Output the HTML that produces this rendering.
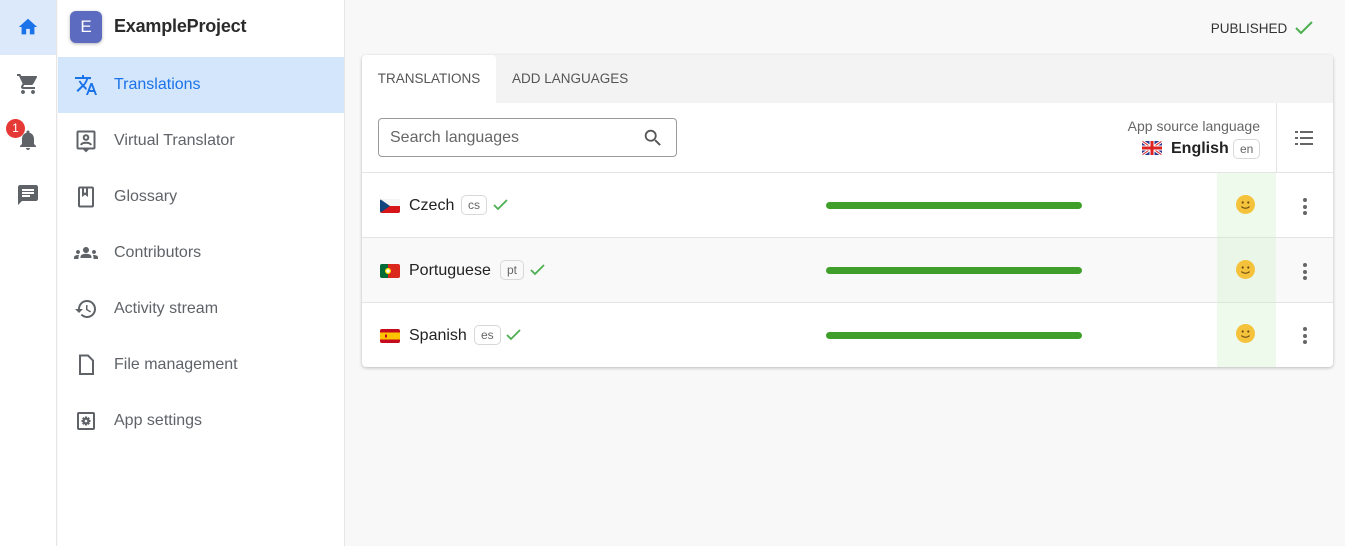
<!DOCTYPE html>
<html><head><meta charset="utf-8"><style>
*{box-sizing:border-box;margin:0;padding:0}
body{width:1345px;height:546px;overflow:hidden;background:#f8f8f8;font-family:"Liberation Sans",Arial,sans-serif;position:relative;color:#333}
.rail{position:absolute;left:0;top:0;width:57px;height:546px;background:#fff;border-right:1px solid #e6e6e6}
.rail .home{position:absolute;left:0;top:0;width:56px;height:55px;background:#dbe9fb}
.ic{position:absolute}
.side{position:absolute;left:58px;top:0;width:287px;height:546px;background:#fff;border-right:1px solid #e6e6e6}
.proj{position:absolute;left:12px;top:11px;width:32px;height:32px;border-radius:6px;background:#5c6bc0;color:#fff;font-size:17px;text-align:center;line-height:32px;box-shadow:0 1px 3px rgba(0,0,0,.3)}
.ptitle{position:absolute;left:56px;top:16px;font-size:18px;font-weight:bold;color:#2b2b2b;letter-spacing:-.2px}
.item{position:absolute;left:0;width:286px;height:56px;font-size:16px;color:#5f6368}
.item span{position:absolute;left:56px;top:19px}
.item svg{position:absolute;left:16px;top:16px}
.item.sel{background:#d4e6fc;color:#1a73e8}
.pub{position:absolute;right:31px;top:19px;font-size:13.5px;color:#333}
.card{position:absolute;left:362px;top:55px;width:971px;height:312px;background:#fff;border-radius:4px;box-shadow:0 1px 3px rgba(0,0,0,.25);overflow:hidden}
.tabs{height:48px;background:#f3f3f3;position:relative}
.tab{position:absolute;top:0;height:48px;line-height:48px;font-size:13.5px;color:#555}
.tab.act{background:#fff;left:0;width:134px;border-radius:4px 4px 0 0;text-align:center}
.hdr{position:absolute;top:48px;left:0;width:971px;height:70px;border-bottom:1px solid #e4e4e4}
.search{position:absolute;left:16px;top:15px;width:299px;height:39px;border:1px solid #9a9a9a;border-radius:4px;font-size:16px;color:#666;padding:10px 11px}
.row{position:absolute;left:0;width:971px;height:65px;border-bottom:1px solid #e4e4e4}
.row.alt{background:#f9f9f9}
.flag{position:absolute;left:18px;top:26px;width:20px;height:14px;border-radius:2px;overflow:hidden}
.lname{position:absolute;left:47px;top:24px;font-size:16px;color:#222}
.code{position:absolute;top:22px;height:20px;border:1px solid #d8d8d8;border-radius:5px;font-size:12px;color:#666;padding:2px 6px}
.bar{position:absolute;left:464px;top:29px;width:256px;height:7px;border-radius:4px;background:#3f9f2a}
.green{position:absolute;left:855px;top:118px;width:59px;height:194px;background:rgba(200,240,190,.3)}
.smile{position:absolute;left:874px;width:19px;height:19px;border-radius:50%;background:#f5c33b}
.dots{position:absolute;left:941px;width:4px}
.dots i{display:block;width:4px;height:4px;border-radius:50%;background:#666;margin-bottom:2.5px}
</style></head><body>
<div class="rail">
 <div class="home"></div>
 <svg class="ic" style="left:17px;top:16px" width="22" height="22" viewBox="0 0 24 24"><path fill="#1a73e8" d="M10 20v-6h4v6h5v-8h3L12 3 2 12h3v8z"/></svg>
 <svg class="ic" style="left:16px;top:72px" width="24" height="24" viewBox="0 0 24 24"><path fill="#5f6368" d="M7 18c-1.1 0-2 .9-2 2s.9 2 2 2 2-.9 2-2-.9-2-2-2zM1 2v2h2l3.6 7.6-1.4 2.4c-.1.3-.2.6-.2 1 0 1.1.9 2 2 2h12v-2H7.4c-.1 0-.2-.1-.2-.2v-.1l.9-1.7h7.4c.8 0 1.4-.4 1.7-1l3.6-6.5L21 4H5.2l-.9-2H1zm16 16c-1.1 0-2 .9-2 2s.9 2 2 2 2-.9 2-2-.9-2-2-2z"/></svg>
 <svg class="ic" style="left:16px;top:128px" width="24" height="24" viewBox="0 0 24 24"><path fill="#5f6368" d="M12 22c1.1 0 2-.9 2-2h-4c0 1.1.9 2 2 2zm6-6v-5c0-3.1-1.6-5.6-4.5-6.3V4c0-.8-.7-1.5-1.5-1.5s-1.5.7-1.5 1.5v.7C7.6 5.4 6 7.9 6 11v5l-2 2v1h16v-1l-2-2z"/></svg>
 <div style="position:absolute;left:6px;top:119px;width:19px;height:19px;border-radius:50%;background:#e53935;color:#fff;font-size:12px;text-align:center;line-height:19px">1</div>
 <svg class="ic" style="left:16px;top:183px" width="24" height="24" viewBox="0 0 24 24"><path fill="#5f6368" d="M20 2H4c-1.1 0-2 .9-2 2v18l4-4h14c1.1 0 2-.9 2-2V4c0-1.1-.9-2-2-2zM6 9h12v2H6V9zm8 5H6v-2h8v2zm4-6H6V6h12v2z"/></svg>
</div>
<div class="side">
 <div class="proj">E</div><div class="ptitle">ExampleProject</div>
 <div class="item sel" style="top:57px"><svg width="24" height="24" viewBox="0 0 24 24"><path fill="#1a73e8" d="M12.9 15.1l-2.5-2.5v0c1.7-1.9 3-4.1 3.7-6.5H17V4h-7V2H8v2H1v2h11.2c-.7 1.9-1.7 3.8-3.2 5.4-1-1.1-1.8-2.3-2.4-3.5h-2c.7 1.600 1.7 3.2 3 4.6l-5.1 5L4 19l5-5 3.1 3.1.8-2zM18.5 10h-2L12 22h2l1.1-3h4.8l1.1 3h2l-4.5-12zm-2.6 7l1.6-4.3 1.6 4.3h-3.2z"/></svg><span>Translations</span></div>
 <div class="item" style="top:113px"><svg width="24" height="24" viewBox="0 0 24 24" fill="none" stroke="#5f6368" stroke-width="2"><rect x="3.5" y="2.5" width="17" height="17" rx="1"/><circle cx="12" cy="8.5" r="2.3"/><path d="M7 16c1-3 9-3 10 0M9.5 19.5l2.5 2.5 2.5-2.5"/></svg><span>Virtual Translator</span></div>
 <div class="item" style="top:169px"><svg width="24" height="24" viewBox="0 0 24 24" fill="none" stroke="#5f6368" stroke-width="2"><rect x="5" y="2.5" width="14" height="19" rx="1"/><path d="M9 3v7l2-1.5L13 10V3"/></svg><span>Glossary</span></div>
 <div class="item" style="top:225px"><svg width="24" height="24" viewBox="0 0 24 24"><path fill="#5f6368" d="M12 12.8c1.6 0 3.1.4 4 .8.9.4 1.5 1.3 1.5 2.3V17h-11v-1.1c0-1 .6-1.9 1.5-2.3 1-.4 2.4-.8 4-.8zM4 13c1.1 0 2-.9 2-2s-.9-2-2-2-2 .9-2 2 .9 2 2 2zm1.1 1.1C4.8 14 4.4 14 4 14c-1 0-1.9.2-2.8.6C.5 14.9 0 15.6 0 16.4V18h4.5v-1.6c0-.8.2-1.6.6-2.3zM20 13c1.1 0 2-.9 2-2s-.9-2-2-2-2 .9-2 2 .9 2 2 2zm4 3.4c0-.8-.5-1.5-1.2-1.8-.9-.4-1.8-.6-2.8-.6-.4 0-.8 0-1.1.1.4.7.6 1.5.6 2.3V18H24v-1.6zM12 6c1.7 0 3 1.3 3 3s-1.3 3-3 3-3-1.3-3-3 1.3-3 3-3z"/></svg><span>Contributors</span></div>
 <div class="item" style="top:281px"><svg width="24" height="24" viewBox="0 0 24 24"><path fill="#5f6368" d="M13 3a9 9 0 0 0-9 9H1l3.9 3.9.1.1L9 12H6c0-3.9 3.1-7 7-7s7 3.1 7 7-3.1 7-7 7c-1.9 0-3.7-.8-4.9-2.1l-1.4 1.4C8.3 20 10.5 21 13 21a9 9 0 0 0 0-18zm-1 5v5l4.3 2.5.7-1.2-3.5-2.1V8H12z"/></svg><span>Activity stream</span></div>
 <div class="item" style="top:337px"><svg width="24" height="24" viewBox="0 0 24 24" fill="none" stroke="#5f6368" stroke-width="2"><path d="M6 2.5h8l5 5V21H6z"/></svg><span>File management</span></div>
 <div class="item" style="top:393px"><svg width="24" height="24" viewBox="0 0 24 24"><rect x="4" y="4" width="16" height="16" rx="1" fill="none" stroke="#5f6368" stroke-width="2"/><path stroke="#5f6368" stroke-width="2.2" d="M12 7.5v9M7.5 12h9M8.8 8.8l6.4 6.4M15.2 8.8l-6.4 6.4"/><circle cx="12" cy="12" r="3.3" fill="#5f6368"/><circle cx="12" cy="12" r="1.3" fill="#fff"/></svg><span>App settings</span></div>
</div>
<div class="pub">PUBLISHED <svg style="vertical-align:-4px;margin-left:3px" width="20" height="18" viewBox="0 0 20 18"><path d="M2 9l5 5L18 3" fill="none" stroke="#4caf50" stroke-width="2"/></svg></div>
<div class="card">
 <div class="tabs"><div class="tab act">TRANSLATIONS</div><div class="tab" style="left:150px">ADD LANGUAGES</div></div>
 <div class="hdr">
  <div class="search">Search languages<svg style="position:absolute;right:12px;top:8px" width="22" height="22" viewBox="0 0 24 24"><path fill="#555" d="M15.5 14h-.8l-.3-.3c1-1.1 1.6-2.6 1.6-4.2a6.5 6.5 0 1 0-6.5 6.5c1.6 0 3.1-.6 4.2-1.6l.3.3v.8l5 5 1.5-1.5-5-5zm-6 0C7 14 5 12 5 9.5S7 5 9.5 5 14 7 14 9.5 12 14 9.5 14z"/></svg></div>
  <div style="position:absolute;right:73px;top:15px;font-size:14px;color:#666">App source language</div>
  <div style="position:absolute;left:780px;top:38px;width:20px;height:14px;overflow:hidden;border-radius:2px"><svg width="20" height="14" viewBox="0 0 20 14"><rect width="20" height="14" fill="#2b3a8f"/><path d="M0 0L20 14M20 0L0 14" stroke="#fff" stroke-width="3"/><path d="M0 0L20 14M20 0L0 14" stroke="#d22" stroke-width="1"/><path d="M10 0v14M0 7h20" stroke="#fff" stroke-width="5"/><path d="M10 0v14M0 7h20" stroke="#d22" stroke-width="3"/></svg></div>
  <div style="position:absolute;left:809px;top:37px;font-size:16px;font-weight:bold;color:#222">English</div>
  <div class="code" style="left:871px;top:36px">en</div>
  <div style="position:absolute;left:914px;top:0;width:1px;height:70px;background:#e4e4e4"></div>
  <svg style="position:absolute;left:933px;top:26px" width="20" height="18" viewBox="0 0 20 18"><g fill="#666"><rect x="0" y="2" width="3" height="2"/><rect x="5" y="2" width="13" height="2"/><rect x="0" y="8" width="3" height="2"/><rect x="5" y="8" width="13" height="2"/><rect x="0" y="14" width="3" height="2"/><rect x="5" y="14" width="13" height="2"/></g></svg>
 </div>
 <div class="row" style="top:118px">
  <div class="flag"><svg width="20" height="14"><rect width="20" height="7" fill="#f4f4f4"/><rect y="7" width="20" height="7" fill="#d7141a"/><path d="M0 0L10 7 0 14z" fill="#11457e"/></svg></div>
  <div class="lname">Czech</div><div class="code" style="left:99px">cs</div>
  <svg style="position:absolute;left:131px;top:25px" width="16" height="14" viewBox="0 0 16 14"><path d="M1 7l4 4 9-9" fill="none" stroke="#4caf50" stroke-width="1.8"/></svg>
  <div class="bar"></div>
 </div>
 <div class="row alt" style="top:183px">
  <div class="flag"><svg width="20" height="14"><rect width="8" height="14" fill="#046a38"/><rect x="8" width="12" height="14" fill="#da291c"/><circle cx="8" cy="7" r="3" fill="#ffe100"/><circle cx="8" cy="7" r="1.7" fill="#fff"/></svg></div>
  <div class="lname">Portuguese</div><div class="code" style="left:138px">pt</div>
  <svg style="position:absolute;left:168px;top:25px" width="16" height="14" viewBox="0 0 16 14"><path d="M1 7l4 4 9-9" fill="none" stroke="#4caf50" stroke-width="1.8"/></svg>
  <div class="bar"></div>
 </div>
 <div class="row" style="top:248px;border-bottom:none">
  <div class="flag"><svg width="20" height="14"><rect width="20" height="14" fill="#c60b1e"/><rect y="3.5" width="20" height="7" fill="#ffc400"/><rect x="5" y="5.5" width="2" height="3" fill="#c60b1e"/></svg></div>
  <div class="lname">Spanish</div><div class="code" style="left:112px">es</div>
  <svg style="position:absolute;left:144px;top:25px" width="16" height="14" viewBox="0 0 16 14"><path d="M1 7l4 4 9-9" fill="none" stroke="#4caf50" stroke-width="1.8"/></svg>
  <div class="bar"></div>
 </div>
 <div class="green"></div>
 <div class="smile" style="top:140px"><svg width="19" height="19" viewBox="0 0 19 19"><circle cx="6.7" cy="7.5" r="1.1" fill="#6b4a10"/><circle cx="12.3" cy="7.5" r="1.1" fill="#6b4a10"/><path d="M5.5 11.5c2 2.3 6 2.3 8 0" fill="none" stroke="#6b4a10" stroke-width="1.1"/></svg></div>
 <div class="smile" style="top:205px"><svg width="19" height="19" viewBox="0 0 19 19"><circle cx="6.7" cy="7.5" r="1.1" fill="#6b4a10"/><circle cx="12.3" cy="7.5" r="1.1" fill="#6b4a10"/><path d="M5.5 11.5c2 2.3 6 2.3 8 0" fill="none" stroke="#6b4a10" stroke-width="1.1"/></svg></div>
 <div class="smile" style="top:269px"><svg width="19" height="19" viewBox="0 0 19 19"><circle cx="6.7" cy="7.5" r="1.1" fill="#6b4a10"/><circle cx="12.3" cy="7.5" r="1.1" fill="#6b4a10"/><path d="M5.5 11.5c2 2.3 6 2.3 8 0" fill="none" stroke="#6b4a10" stroke-width="1.1"/></svg></div>
 <div class="dots" style="top:143px"><i></i><i></i><i></i></div>
 <div class="dots" style="top:208px"><i></i><i></i><i></i></div>
 <div class="dots" style="top:272px"><i></i><i></i><i></i></div>
</div>
</body></html>
